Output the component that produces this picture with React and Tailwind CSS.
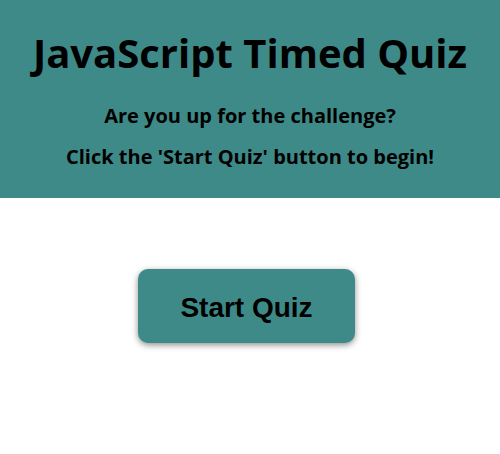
export default function App() {
  return (
    <div className="min-h-[454px] bg-white font-['Open_Sans',sans-serif]">
      <header className="flex h-[198px] flex-col items-center bg-[#3e8a88] pt-[25px] text-black">
        <h1 className="text-[40px] font-bold leading-[56px]">JavaScript Timed Quiz</h1>
        <p className="mt-[21px] text-[20px] font-bold leading-[28px]">Are you up for the challenge?</p>
        <p className="mt-[13px] text-[20px] font-bold leading-[28px]">Click the 'Start Quiz' button to begin!</p>
      </header>
      <main className="flex justify-center pt-[71px] pr-[7px]">
        <button className="h-[74px] w-[217px] rounded-[10px] bg-[#3e8a88] pt-[3px] font-['Liberation_Sans',Arial,sans-serif] text-[28px] font-bold text-black shadow-[0_2px_6px_rgba(0,0,0,0.45)]">
          Start Quiz
        </button>
      </main>
    </div>
  );
}
